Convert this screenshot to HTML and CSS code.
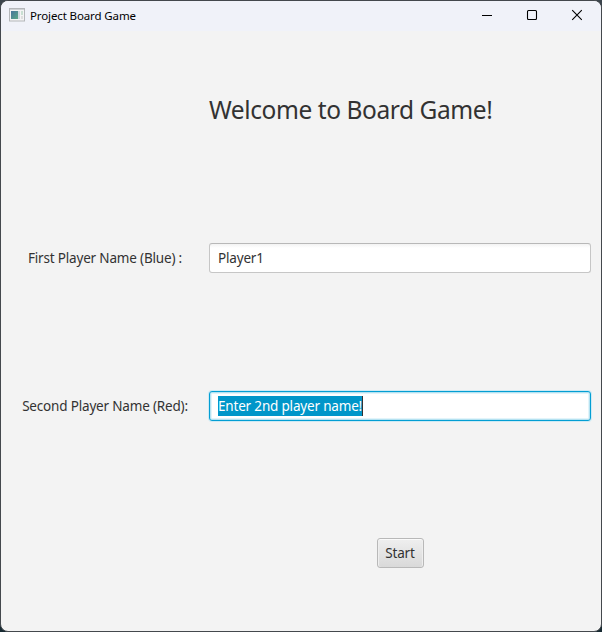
FILE: index.html
```html
<!DOCTYPE html>
<html lang="en">
<head>
<meta charset="utf-8">
<title>Project Board Game</title>
<link rel="stylesheet" href="styles.css">
</head>
<body>
<div class="window">
  <header class="titlebar">
    <svg class="app-icon" width="16" height="14" viewBox="0 0 16 14">
      <defs><linearGradient id="g" x1="0" y1="0" x2="1" y2="1"><stop offset="0" stop-color="#47749c"/><stop offset="1" stop-color="#5aa886"/></linearGradient></defs>
      <rect x=".5" y=".5" width="15" height="12.5" fill="#f4f4f4" stroke="#b4b7ba"/>
      <path d="M1 1.5h14" stroke="#cfd2d5"/>
      <rect x="2" y="3" width="7" height="8" fill="url(#g)"/>
      <rect x="9" y="3" width="2" height="8" fill="#d0d9e0"/>
      <rect x="12" y="3" width="2" height="4" fill="#c9dfd2"/>
      <rect x="12" y="8" width="2" height="3" fill="#dedede"/>
    </svg>
    <span class="title">Project Board Game</span>
    <div class="controls">
      <svg width="12" height="12" viewBox="0 0 12 12"><path d="M1 6.5h10"/></svg>
      <svg width="12" height="12" viewBox="0 0 12 12"><rect x="1.5" y="1.5" width="9" height="9" rx="1"/></svg>
      <svg width="12" height="12" viewBox="0 0 12 12"><path d="M1.2 1.2l9.6 9.6M10.8 1.2l-9.6 9.6"/></svg>
    </div>
  </header>
  <main class="form">
    <h1 class="heading">Welcome to Board Game!</h1>
    <div class="label">First Player Name (Blue) :</div>
    <div class="field"><span>Player1</span></div>
    <div class="label">Second Player Name (Red):</div>
    <div class="field focused"><span class="selection">Enter 2nd player name!</span></div>
    <button class="start">Start</button>
  </main>
</div>
</body>
</html>
```
FILE: styles.css
```css
* { box-sizing: border-box; }
html { background: linear-gradient(#3c454d, #172a32); }
body {
  margin: 0;
  width: 602px;
  height: 632px;
  overflow: hidden;
  font-family: "Noto Sans", "Open Sans", sans-serif;
  color: #323232;
}
.window {
  width: 602px;
  height: 632px;
  border: 1px solid #44484d;
  border-radius: 8px;
  background: #f3f3f3;
  overflow: hidden;
}
.titlebar {
  height: 30px;
  display: flex;
  align-items: center;
  padding-left: 8px;
  background: #f0f2f9;
  color: #000;
}
.title { margin-left: 5px; margin-top: -1px; font-size: 11.5px; letter-spacing: -0.12px; white-space: nowrap; }
.app-icon { margin-top: -2px; }
.controls { margin-left: auto; display: flex; gap: 33px; padding-right: 18px; margin-top: -2px; }
.controls svg { fill: none; stroke: #000; stroke-width: 1.1; }
.form {
  display: grid;
  grid-template-columns: 208px 382px;
  grid-template-rows: repeat(4, 148px);
  align-items: center;
  padding-top: 5px;
  font-size: 13.5px;
  letter-spacing: -0.18px;
}
.heading {
  grid-column: 2;
  margin: 0;
  font-size: 24.5px;
  font-weight: 400;
  line-height: 32px;
  letter-spacing: -0.42px;
  white-space: nowrap;
}
.label { text-align: center; width: 208px; white-space: nowrap; line-height: 20px; padding-bottom: 1px; }
.field {
  height: 30px;
  display: flex;
  align-items: center;
  padding-left: 8px;
  border: 1px solid #c6c6c6;
  border-top-color: #b8b8b8;
  border-radius: 3px;
  background: linear-gradient(#f3f3f3, #fff 4px);
  line-height: 20px;
  white-space: nowrap;
}
.focused {
  border-color: #039ed3;
  background: #fff;
  box-shadow: 0 0 0 1px #cdeaf4, inset 0 0 0 1px #b5e2f1, inset 0 0 0 2px #e2f4fa;
}
.selection {
  height: 20px;
  background: #0096c9;
  color: #fff;
  border-right: 1px solid #323232;
}
.start {
  grid-column: 2;
  justify-self: center;
  width: 47px;
  height: 30px;
  margin-top: -2px;
  padding: 0 0 1px;
  border: 1px solid #b8b8b8;
  border-radius: 3px;
  background: linear-gradient(#efefef, #d9d9d9);
  box-shadow: inset 0 1px #fafafa, inset 1px 0 #eee, inset -1px 0 #eee;
  color: #323232;
  font: 13.5px "Noto Sans", sans-serif;
  letter-spacing: -0.18px;
}
```
